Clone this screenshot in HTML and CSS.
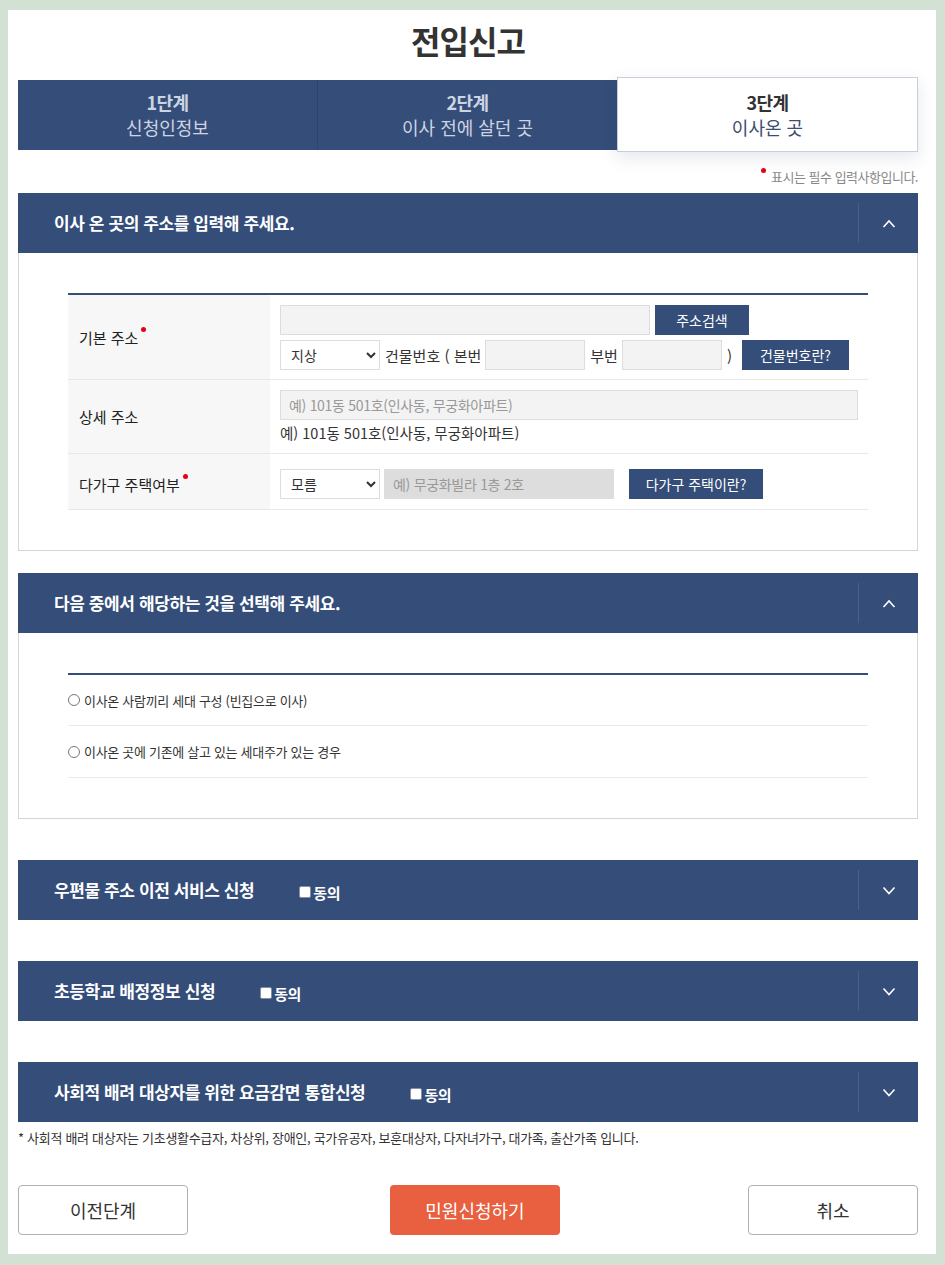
FILE: index.html
```html
<!DOCTYPE html>
<html lang="ko">
<head>
    <meta charset="UTF-8">
    <meta name="viewport" content="width=device-width, initial-scale=1.0">
    <title>전입신고</title>
    <link rel="stylesheet" href="styles.css">
</head>
<body>
    <div class="page">
        <h1>전입신고</h1>

        <div class="steps">
            <div class="step">
                <strong>1단계</strong>
                <span>신청인정보</span>
            </div>
            <div class="step">
                <strong>2단계</strong>
                <span>이사 전에 살던 곳</span>
            </div>
            <div class="step active">
                <strong>3단계</strong>
                <span>이사온 곳</span>
            </div>
        </div>

        <p class="req-note"><i class="dot"></i>표시는 필수 입력사항입니다.</p>

        <div class="section">
            <div class="section-head">
                <h2>이사 온 곳의 주소를 입력해 주세요.</h2>
                <button class="toggle" aria-label="접기">
                    <svg width="14" height="9" viewBox="0 0 14 9"><polyline points="1.5,8 7,2 12.5,8" fill="none" stroke="#fff" stroke-width="1.6"/></svg>
                </button>
            </div>
            <div class="section-body">
                <table class="form-table">
                    <tr class="row-addr">
                        <th>기본 주소<i class="dot"></i></th>
                        <td>
                            <div class="line">
                                <input type="text" class="inp inp-addr">
                                <button class="btn-navy btn-search">주소검색</button>
                            </div>
                            <div class="line">
                                <select class="sel"><option>지상</option></select>
                                <span class="txt">건물번호 ( 본번</span>
                                <input type="text" class="inp inp-num">
                                <span class="txt">부번</span>
                                <input type="text" class="inp inp-num">
                                <span class="txt">)</span>
                                <button class="btn-navy btn-bldg">건물번호란?</button>
                            </div>
                        </td>
                    </tr>
                    <tr class="row-detail">
                        <th>상세 주소</th>
                        <td>
                            <input type="text" class="inp inp-detail" placeholder="예) 101동 501호(인사동, 무궁화아파트)">
                            <p class="example">예) 101동 501호(인사동, 무궁화아파트)</p>
                        </td>
                    </tr>
                    <tr class="row-multi">
                        <th>다가구 주택여부<i class="dot"></i></th>
                        <td>
                            <div class="line">
                                <select class="sel"><option>모름</option></select>
                                <input type="text" class="inp inp-unit" placeholder="예) 무궁화빌라 1층 2호" disabled>
                                <button class="btn-navy btn-multi">다가구 주택이란?</button>
                            </div>
                        </td>
                    </tr>
                </table>
            </div>
        </div>

        <div class="section">
            <div class="section-head">
                <h2>다음 중에서 해당하는 것을 선택해 주세요.</h2>
                <button class="toggle" aria-label="접기">
                    <svg width="14" height="9" viewBox="0 0 14 9"><polyline points="1.5,8 7,2 12.5,8" fill="none" stroke="#fff" stroke-width="1.6"/></svg>
                </button>
            </div>
            <div class="section-body">
                <ul class="choices">
                    <li><label><input type="radio" name="type"> 이사온 사람끼리 세대 구성 (빈집으로 이사)</label></li>
                    <li><label><input type="radio" name="type"> 이사온 곳에 기존에 살고 있는 세대주가 있는 경우</label></li>
                </ul>
            </div>
        </div>

        <div class="section closed">
            <div class="section-head">
                <h2>우편물 주소 이전 서비스 신청</h2>
                <span class="agree"><i class="chk"></i>동의</span>
                <button class="toggle" aria-label="펼치기">
                    <svg width="14" height="9" viewBox="0 0 14 9"><polyline points="1.5,1.5 7,7.5 12.5,1.5" fill="none" stroke="#fff" stroke-width="1.6"/></svg>
                </button>
            </div>
        </div>

        <div class="section closed">
            <div class="section-head">
                <h2>초등학교 배정정보 신청</h2>
                <span class="agree"><i class="chk"></i>동의</span>
                <button class="toggle" aria-label="펼치기">
                    <svg width="14" height="9" viewBox="0 0 14 9"><polyline points="1.5,1.5 7,7.5 12.5,1.5" fill="none" stroke="#fff" stroke-width="1.6"/></svg>
                </button>
            </div>
        </div>

        <div class="section closed last">
            <div class="section-head">
                <h2>사회적 배려 대상자를 위한 요금감면 통합신청</h2>
                <span class="agree"><i class="chk"></i>동의</span>
                <button class="toggle" aria-label="펼치기">
                    <svg width="14" height="9" viewBox="0 0 14 9"><polyline points="1.5,1.5 7,7.5 12.5,1.5" fill="none" stroke="#fff" stroke-width="1.6"/></svg>
                </button>
            </div>
        </div>
        <p class="foot-note">* 사회적 배려 대상자는 기초생활수급자, 차상위, 장애인, 국가유공자, 보훈대상자, 다자녀가구, 대가족, 출산가족 입니다.</p>

        <div class="actions">
            <button class="btn-line">이전단계</button>
            <button class="btn-submit">민원신청하기</button>
            <button class="btn-line">취소</button>
        </div>
    </div>
</body>
</html>
```

FILE: styles.css
```css
body {
    margin: 0;
    padding: 10px 9px 11px 8px;
    background-color: #d2e1d3;
    font-family: "Noto Sans CJK KR", "Noto Sans", sans-serif;
    color: #333333;
}
.page {
    background: #ffffff;
    padding: 0 18px 19px 10px;
}
h1 {
    margin: 0;
    height: 60px;
    line-height: 60px;
    text-align: center;
    font-size: 32px;
    font-weight: 700;
    letter-spacing: -1px;
    color: #333333;
}
.steps {
    display: flex;
    margin-top: 10px;
    height: 70px;
}
.step {
    flex: 1;
    display: flex;
    flex-direction: column;
    align-items: center;
    justify-content: center;
    background: #344d79;
    color: #cdd4e2;
    font-size: 18px;
    line-height: 25px;
    letter-spacing: 0;
}
.step + .step {
    border-left: 1px solid #2d446c;
}
.step strong {
    font-weight: 700;
    letter-spacing: -0.5px;
}
.step.active {
    background: #ffffff;
    color: #3c4e70;
    border: 1px solid #c8cedb;
    margin: -3px 0 -2px;
    box-shadow: 0 6px 16px rgba(40, 60, 100, 0.12);
}
.step.active strong {
    color: #333333;
}
.req-note {
    margin: 0;
    padding: 18px 0 8px;
    text-align: right;
    font-size: 13px;
    line-height: 17px;
    color: #888888;
    letter-spacing: -0.5px;
}
.dot {
    display: inline-block;
    width: 5px;
    height: 5px;
    border-radius: 50%;
    background: #e60012;
    vertical-align: top;
    margin: 0 4px 0 2px;
}
.req-note .dot {
    margin: 0 5px 0 0;
}
.section {
    margin-bottom: 22px;
}
.section + .section {
    margin-bottom: 41px;
}
.section.last {
    margin-bottom: 0;
}
.section-head {
    display: flex;
    align-items: center;
    height: 60px;
    background: #344d79;
    color: #ffffff;
    padding-left: 36px;
}
.section-head h2 {
    margin: 0;
    font-size: 17px;
    font-weight: 700;
    letter-spacing: -0.4px;
    line-height: 24px;
}
.agree {
    display: flex;
    align-items: center;
    margin: 4px 0 0 45px;
    font-size: 15px;
    font-weight: 700;
    letter-spacing: -0.5px;
}
.chk {
    width: 10px;
    height: 10px;
    background: #ffffff;
    border: 1px solid #8890a0;
    border-radius: 2px;
    margin-right: 2px;
}
.toggle {
    margin-left: auto;
    width: 60px;
    height: 40px;
    border: none;
    border-left: 1px solid #4a6089;
    background: transparent;
    display: flex;
    align-items: center;
    justify-content: center;
    padding: 0;
    cursor: pointer;
}
.section-body {
    border: 1px solid #d5d5d5;
    border-top: none;
    padding: 40px 49px;
}
.form-table {
    width: 100%;
    border-collapse: collapse;
    border-top: 2px solid #344d79;
}
.form-table th,
.form-table td {
    border-bottom: 1px solid #e8e8e8;
    padding: 10px;
    vertical-align: middle;
}
.form-table th {
    width: 189px;
    padding-left: 11px;
    background: #f7f7f7;
    text-align: left;
    font-size: 15px;
    font-weight: 400;
    color: #222222;
}
.form-table th .dot {
    margin-left: 3px;
}
.row-addr td {
    padding-bottom: 9px;
}
.row-multi td,
.row-multi th {
    padding-top: 15px;
    padding-bottom: 10px;
}
.line {
    display: flex;
    align-items: center;
    gap: 4px;
}
.line + .line {
    margin-top: 5px;
}
.txt {
    font-size: 15px;
    color: #333333;
    margin-left: 1px;
}
.inp {
    box-sizing: border-box;
    height: 30px;
    border: 1px solid #dddddd;
    background: #f3f3f3;
    padding: 0 8px;
    font-family: inherit;
    font-size: 14px;
    letter-spacing: -0.3px;
}
.inp::placeholder {
    color: #999999;
}
.inp-addr {
    width: 370px;
}
.inp-num {
    width: 100px;
}
.inp-detail {
    width: 578px;
    display: block;
}
.inp-unit {
    width: 230px;
    background: #dddddd;
}
.sel {
    box-sizing: border-box;
    width: 100px;
    height: 30px;
    border: 1px solid #dddddd;
    background: #ffffff;
    padding: 0 6px;
    font-family: inherit;
    font-size: 14px;
    color: #333333;
}
.btn-navy {
    box-sizing: border-box;
    height: 30px;
    border: none;
    background: #344d79;
    color: #ffffff;
    font-family: inherit;
    font-size: 14px;
    padding: 0;
    cursor: pointer;
}
.btn-search {
    width: 94px;
    margin-left: 1px;
}
.btn-bldg {
    width: 107px;
    margin-left: 6px;
}
.btn-multi {
    width: 134px;
    margin-left: 11px;
}
.example {
    margin: 3px 0 0;
    font-size: 14.5px;
    line-height: 20px;
    color: #333333;
}
.choices {
    list-style: none;
    margin: 0;
    padding: 0;
    border-top: 2px solid #344d79;
}
.choices li {
    height: 51px;
    display: flex;
    align-items: center;
    border-bottom: 1px solid #ebebeb;
    font-size: 13px;
    letter-spacing: -0.3px;
    color: #333333;
}
.choices li:first-child {
    height: 50px;
}
.choices label {
    display: flex;
    align-items: center;
    gap: 4px;
}
.choices input {
    margin: 0;
    width: 12px;
    height: 12px;
}
.foot-note {
    margin: 7px 0 0;
    font-size: 13px;
    line-height: 18px;
    color: #333333;
    letter-spacing: -0.3px;
}
.actions {
    display: flex;
    justify-content: space-between;
    margin-top: 38px;
}
.actions button {
    width: 170px;
    height: 50px;
    border-radius: 4px;
    font-family: inherit;
    font-size: 18px;
    cursor: pointer;
}
.btn-line {
    background: #ffffff;
    border: 1px solid #b0b0b0;
    color: #333333;
}
.btn-submit {
    background: #e8603f;
    border: none;
    color: #ffffff;
    margin-left: 14px;
}
```
